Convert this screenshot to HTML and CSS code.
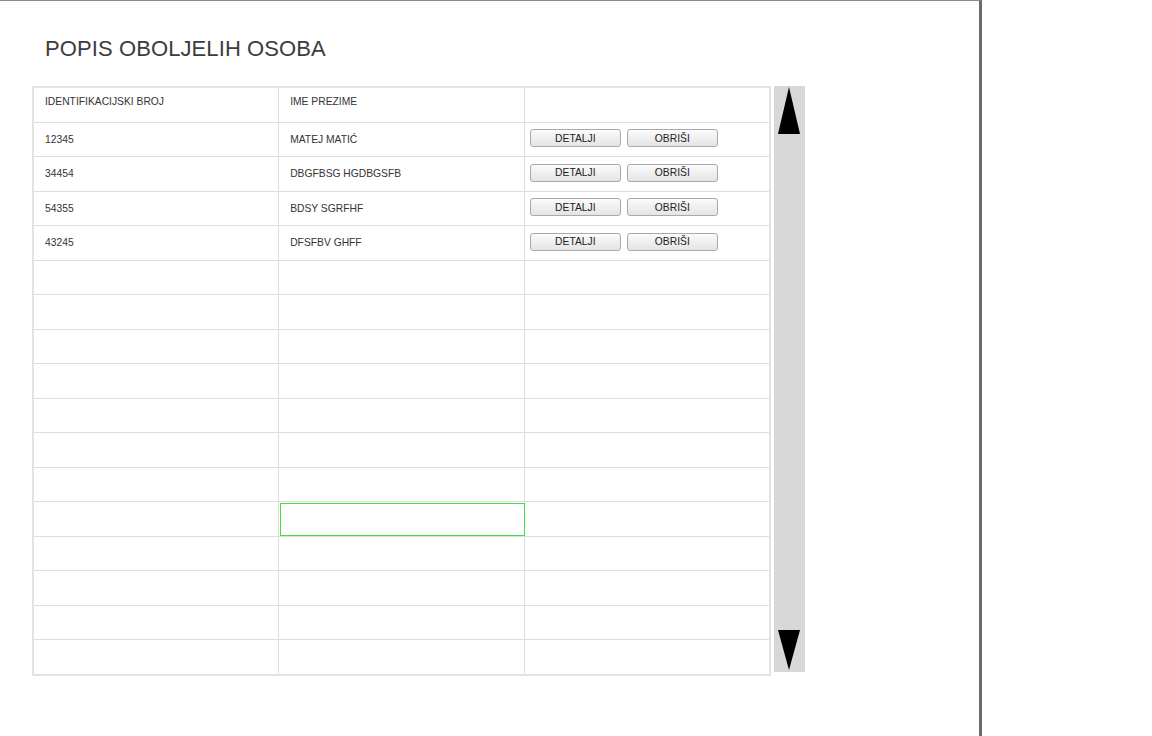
FILE: index.html
```html
<!DOCTYPE html>
<html>
<head>
<meta charset="utf-8">
<link rel="stylesheet" href="styles.css">
</head>
<body>
<div class="frame">
  <h1 class="title">POPIS OBOLJELIH OSOBA</h1>
  <div class="grid-wrap">
    <table class="list">
      <tr class="head"><td>IDENTIFIKACIJSKI BROJ</td><td>IME PREZIME</td><td></td></tr>
      <tr><td>12345</td><td>MATEJ MATIĆ</td><td class="acts"><button class="btn">DETALJI</button><button class="btn">OBRIŠI</button></td></tr>
      <tr><td>34454</td><td>DBGFBSG HGDBGSFB</td><td class="acts"><button class="btn">DETALJI</button><button class="btn">OBRIŠI</button></td></tr>
      <tr><td>54355</td><td>BDSY SGRFHF</td><td class="acts"><button class="btn">DETALJI</button><button class="btn">OBRIŠI</button></td></tr>
      <tr><td>43245</td><td>DFSFBV GHFF</td><td class="acts"><button class="btn">DETALJI</button><button class="btn">OBRIŠI</button></td></tr>
      <tr><td></td><td></td><td></td></tr>
      <tr><td></td><td></td><td></td></tr>
      <tr><td></td><td></td><td></td></tr>
      <tr><td></td><td></td><td></td></tr>
      <tr><td></td><td></td><td></td></tr>
      <tr><td></td><td></td><td></td></tr>
      <tr><td></td><td></td><td></td></tr>
      <tr><td></td><td class="sel-cell"><div class="sel"></div></td><td></td></tr>
      <tr><td></td><td></td><td></td></tr>
      <tr><td></td><td></td><td></td></tr>
      <tr><td></td><td></td><td></td></tr>
      <tr><td></td><td></td><td></td></tr>
    </table>
    <div class="scrollbar">
      <svg class="arrow" width="30" height="50" viewBox="0 0 30 50"><polygon points="15,1 26,48 4,48" fill="#000"/></svg>
      <svg class="arrow" width="30" height="42" viewBox="0 0 30 42"><polygon points="4,0 26,0 15,40" fill="#000"/></svg>
    </div>
  </div>
</div>
</body>
</html>
```
FILE: styles.css
```css
html, body {
  margin: 0;
  padding: 0;
  background: #fff;
}
body {
  font-family: "Liberation Sans", Arial, sans-serif;
  width: 1152px;
  height: 736px;
  overflow: hidden;
}
.frame {
  box-sizing: border-box;
  width: 982px;
  height: 736px;
  border-top: 1px solid #8a8a8a;
  border-right: 3px solid #6a6a6a;
  padding: 0 0 0 32px;
}
.title {
  margin: 35px 0 0 13px;
  font-weight: normal;
  font-size: 22px;
  line-height: 26px;
  color: #3c3c3c;
  letter-spacing: 0.1px;
}
.grid-wrap {
  margin-top: 24px;
  display: flex;
  align-items: flex-start;
  gap: 3px;
}
.list {
  border-collapse: collapse;
  width: 739px;
  table-layout: fixed;
  border: 2px solid #e2e2e2;
}
.list td {
  border: 1px solid #dedede;
  height: 33.5px;
  padding: 0 0 0 11px;
  font-size: 10.3px;
  color: #333;
  letter-spacing: 0;
  vertical-align: middle;
  white-space: nowrap;
}
.list tr.head td {
  height: 26.5px;
  padding-bottom: 7px;
}
.list td.acts {
  padding-left: 5px;
}
.btn {
  box-sizing: border-box;
  width: 91px;
  height: 18px;
  margin: 0 6px 2px 0;
  padding: 0;
  border: 1px solid #a9a9a9;
  border-radius: 3px;
  background: linear-gradient(#fbfbfb, #e4e4e4);
  font-family: "Liberation Sans", Arial, sans-serif;
  font-size: 10.3px;
  color: #222;
}
.list td.sel-cell {
  padding: 0;
  vertical-align: bottom;
}
.sel {
  position: relative;
  z-index: 1;
  box-sizing: border-box;
  height: 33px;
  margin-left: 1px;
  margin-right: -1px;
  border: 1px solid #3fdd3f;
}
.scrollbar {
  width: 31px;
  height: 586px;
  background: #d8d8d8;
  display: flex;
  flex-direction: column;
  justify-content: space-between;
}
.arrow {
  display: block;
}
```
